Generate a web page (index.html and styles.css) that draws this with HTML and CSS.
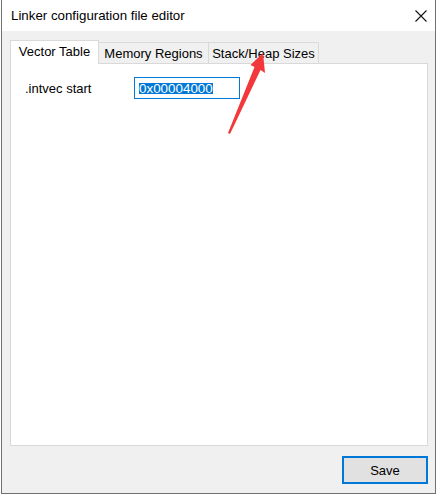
FILE: index.html
```html
<!DOCTYPE html>
<html>
<head>
<meta charset="utf-8">
<link rel="stylesheet" href="styles.css">
</head>
<body>
<div class="window">
  <div class="titlebar">
    <span class="title">Linker configuration file editor</span>
    <svg class="close" width="12" height="12" viewBox="0 0 12 12"><path d="M0.5 0.5 L11.5 11.5 M11.5 0.5 L0.5 11.5" stroke="#111" stroke-width="1.1" fill="none"/></svg>
  </div>
  <div class="content">
    <div class="tabs">
      <div class="tab active">Vector Table</div>
      <div class="tab">Memory Regions</div>
      <div class="tab">Stack/Heap Sizes</div>
    </div>
    <div class="panel">
      <div class="row">
        <span class="label">.intvec start</span>
        <div class="input"><span class="sel">0x00004000</span></div>
      </div>
    </div>
    <div class="footer">
      <div class="button">Save</div>
    </div>
  </div>
  <svg class="arrow" width="437" height="496" viewBox="0 0 437 496">
    <polygon points="262,53 264,73 259.5,70 229,134 227,133 253.5,67 249.5,65" fill="#f2383a"/>
  </svg>
</div>
</body>
</html>
```

FILE: styles.css
```css
html, body {
  margin: 0;
  padding: 0;
  background: #ffffff;
}
body {
  font-family: "Liberation Sans", Arial, sans-serif;
  font-size: 13px;
  color: #000;
  white-space: nowrap;
}
.window {
  position: relative;
  margin-left: 1px;
  width: 435px;
  height: 494px;
  box-sizing: border-box;
  border: 1px solid #707070;
  border-top: none;
  background: #f0f0f0;
  display: flex;
  flex-direction: column;
}
.titlebar {
  height: 31px;
  background: #ffffff;
  display: flex;
  align-items: center;
  justify-content: space-between;
  padding: 0 8px 0 9px;
  flex: none;
}
.title {
  font-size: 13.3px;
  margin-top: -1px;
}
.close {
  margin-top: 1px;
}
.content {
  flex: 1;
  display: flex;
  flex-direction: column;
  padding: 9px 7px 9px 8px;
}
.tabs {
  display: flex;
  align-items: flex-end;
  height: 23px;
  position: relative;
  z-index: 1;
}
.tab {
  box-sizing: border-box;
  height: 21px;
  border: 1px solid #d9d9d9;
  border-left: none;
  border-bottom: none;
  background: #f0f0f0;
  display: flex;
  align-items: center;
  justify-content: center;
  padding: 0 2px;
  line-height: 1;
  white-space: nowrap;
}
.tab:nth-child(2) { width: 110px; }
.tab:nth-child(3) { width: 110px; }
.tab.active {
  width: 89px;
  height: 24px;
  margin-bottom: -1px;
  background: #ffffff;
  border-left: 1px solid #d9d9d9;
  padding-bottom: 2px;
}
.panel {
  box-sizing: border-box;
  width: 418px;
  height: 383px;
  background: #ffffff;
  border: 1px solid #d9d9d9;
  flex: none;
  padding: 13px 0 0 14px;
}
.row {
  display: flex;
  align-items: center;
}
.label {
  width: 109px;
}
.input {
  box-sizing: border-box;
  width: 106px;
  height: 22px;
  border: 1px solid #0078d7;
  display: flex;
  align-items: center;
  padding-left: 4px;
}
.sel {
  background: #0078d7;
  color: #ffffff;
  line-height: 11px;
  height: 11px;
  display: flex;
  align-items: center;
  font-size: 13.4px;
}
.footer {
  display: flex;
  justify-content: flex-end;
  padding-top: 10px;
}
.button {
  box-sizing: border-box;
  width: 86px;
  height: 28px;
  border: 2px solid #0078d7;
  background: #e1e1e1;
  display: flex;
  align-items: center;
  justify-content: center;
}
.arrow {
  position: absolute;
  left: -1px;
  top: 0;
  pointer-events: none;
  z-index: 5;
}
```
